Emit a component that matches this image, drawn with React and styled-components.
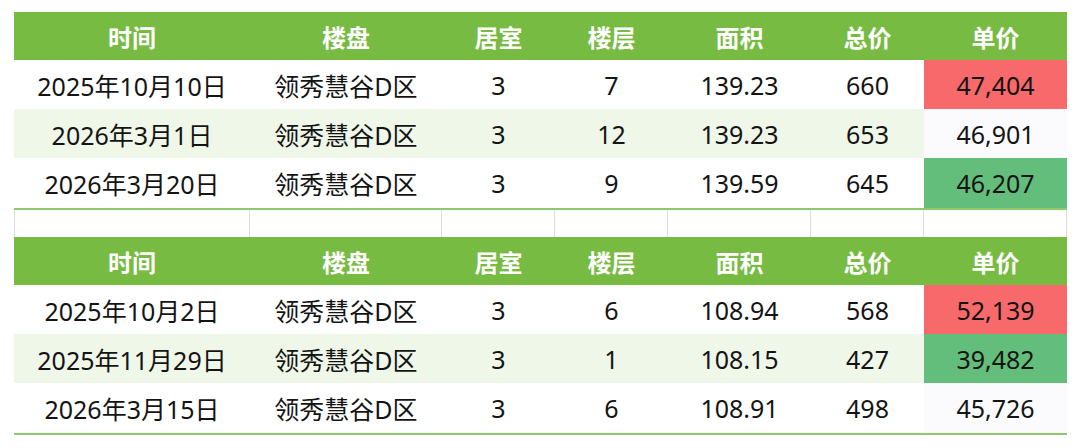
import React from 'react'
import styled, {createGlobalStyle} from 'styled-components'

const GlobalStyle = createGlobalStyle`
  html, body {
    margin: 0;
    padding: 0;
    background: #ffffff;
  }
  body {
    font-family: 'Noto Sans', 'Noto Sans CJK SC', sans-serif;
  }
`

const COLS = '236px 192px 113px 113px 143px 113px 143px'

const headers = ['时间', '楼盘', '居室', '楼层', '面积', '总价', '单价']

const groups = [
  [
    {date: '2025年10月10日', name: '领秀慧谷D区', rooms: 3, floor: 7, area: '139.23', total: 660, unit: '47,404', tone: 'high', h: 49},
    {date: '2026年3月1日', name: '领秀慧谷D区', rooms: 3, floor: 12, area: '139.23', total: 653, unit: '46,901', tone: 'mid', h: 49},
    {date: '2026年3月20日', name: '领秀慧谷D区', rooms: 3, floor: 9, area: '139.59', total: 645, unit: '46,207', tone: 'low', h: 50},
  ],
  [
    {date: '2025年10月2日', name: '领秀慧谷D区', rooms: 3, floor: 6, area: '108.94', total: 568, unit: '52,139', tone: 'high', h: 49},
    {date: '2025年11月29日', name: '领秀慧谷D区', rooms: 3, floor: 1, area: '108.15', total: 427, unit: '39,482', tone: 'low', h: 49},
    {date: '2026年3月15日', name: '领秀慧谷D区', rooms: 3, floor: 6, area: '108.91', total: 498, unit: '45,726', tone: 'mid', h: 50},
  ],
]

const App = () => {
  return (
    <Page>
      <GlobalStyle />
      <Sheet>
        {groups.map((rows, gi) => (
          <React.Fragment key={gi}>
            {gi > 0 && (
              <BlankRow>
                {headers.map((h) => <BlankCell key={h} />)}
              </BlankRow>
            )}
            <Block>
              <HeadRow>
                {headers.map((h) => <HeadCell key={h}>{h}</HeadCell>)}
              </HeadRow>
              {rows.map((r, i) => (
                <Row key={i} $band={i === 1} $h={r.h}>
                  <Cell>{r.date}</Cell>
                  <Cell>{r.name}</Cell>
                  <Cell>{r.rooms}</Cell>
                  <Cell>{r.floor}</Cell>
                  <Cell>{r.area}</Cell>
                  <Cell>{r.total}</Cell>
                  <PriceCell $tone={r.tone}>{r.unit}</PriceCell>
                </Row>
              ))}
            </Block>
          </React.Fragment>
        ))}
      </Sheet>
    </Page>
  )
}

export default App

const Page = styled.div`
  padding: 12px 0 0 14px;
`

const Sheet = styled.div`
  width: 1053px;
  display: flex;
  flex-direction: column;
`

const Block = styled.div`
  display: flex;
  flex-direction: column;
  border-bottom: 2px solid #8fc96b;
`

const HeadRow = styled.div`
  display: grid;
  grid-template-columns: ${COLS};
  height: 48px;
  background-color: #77bb42;
`

const HeadCell = styled.div`
  display: flex;
  align-items: center;
  justify-content: center;
  color: #ffffff;
  font-family: 'Noto Sans CJK SC', sans-serif;
  font-weight: 700;
  font-size: 24px;
`

const Row = styled.div`
  display: grid;
  grid-template-columns: ${COLS};
  height: ${(p) => p.$h}px;
  background-color: ${(p) => (p.$band ? '#eff7e9' : '#ffffff')};
`

const Cell = styled.div`
  display: flex;
  align-items: center;
  justify-content: center;
  color: #141414;
  font-size: 25px;
`

const toneColors = {
  high: '#f8696b',
  mid: '#fbfbfe',
  low: '#63be7b',
}

const PriceCell = styled(Cell)`
  background-color: ${(p) => toneColors[p.$tone]};
`

const BlankRow = styled.div`
  display: grid;
  grid-template-columns: ${COLS};
  height: 27px;
`

const BlankCell = styled.div`
  border-right: 1px solid #dedede;
  &:first-child {
    border-left: 1px solid #dedede;
  }
`
